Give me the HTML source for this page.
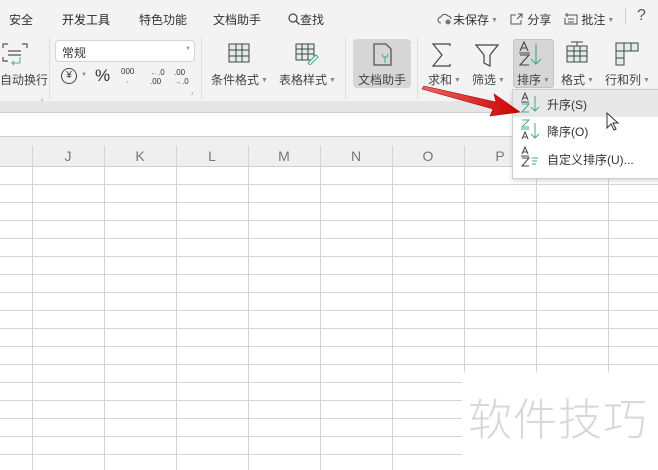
<!DOCTYPE html>
<html><head><meta charset="utf-8"><style>
*{margin:0;padding:0;box-sizing:border-box}
body{width:658px;height:470px;overflow:hidden;background:#fff;font-family:"Liberation Sans","Noto Sans CJK SC",sans-serif;color:#333;position:relative}
.a{position:absolute;white-space:nowrap}
.t{font-size:12px}
.lbl{font-size:12px;color:#444}
.dd{font-size:7px;color:#888;vertical-align:middle;margin-left:2px}
</style></head><body>
<div class="a" style="left:0;top:0;width:658px;height:101px;background:#f3f3f3"></div>
<div class="a t" style="left:9px;top:11px">安全</div>
<div class="a t" style="left:62px;top:11px;color:#222">开发工具</div>
<div class="a t" style="left:139px;top:11px">特色功能</div>
<div class="a t" style="left:213px;top:11px">文档助手</div>
<div class="a t" style="left:288px;top:11px"><svg width="12" height="12" style="vertical-align:-1px"><circle cx="5" cy="5" r="4" fill="none" stroke="#444" stroke-width="1.2"/><path d="M8 8l3.5 3.5" stroke="#444" stroke-width="1.3"/></svg>查找</div>
<div class="a t" style="left:437px;top:11px"><svg width="16" height="12" style="vertical-align:-1px"><path d="M4 10a3 3 0 010-6a4 4 0 017-1a3 3 0 013 3" fill="none" stroke="#555"/><circle cx="11" cy="9" r="2.5" fill="#777"/></svg>未保存<span class="dd">▼</span></div>
<div class="a t" style="left:510px;top:11px"><svg width="14" height="12" style="vertical-align:-1px"><path d="M6 2H1v9h10V7M7 6l5-5M8 1h4v4" fill="none" stroke="#555"/></svg> 分享</div>
<div class="a t" style="left:564px;top:11px"><svg width="14" height="13" style="vertical-align:-1px"><path d="M3 1v4M1 3h4M5 3h8v9H1V6M4 7h6M4 10h6" fill="none" stroke="#555"/></svg> 批注<span class="dd">▼</span></div>
<div class="a" style="left:625px;top:8px;width:1px;height:16px;background:#ccc"></div>
<div class="a" style="left:637px;top:7px;font-size:16px;color:#555">?</div>
<svg class="a" style="left:2px;top:43px" width="26" height="24"><path d="M1 5V1h5M20 1h5v4M1 14v4h5M6 8h13M6 12h13" fill="none" stroke="#555" stroke-width="1.2"/><path d="M18 14v6h-8M12 18l-2 2 2 2" stroke="#5a9" fill="none"/></svg>
<div class="a lbl" style="left:0;top:71px">自动换行</div>
<div class="a" style="left:40px;top:94px;font-size:7px;color:#888">⌟</div>
<div class="a" style="left:49px;top:38px;width:1px;height:60px;background:#ddd"></div>
<div class="a" style="left:55px;top:40px;width:140px;height:22px;border:1px solid #d5d5d5;border-radius:4px;background:#fff"></div>
<div class="a t" style="left:62px;top:44px">常规</div>
<div class="a" style="left:185px;top:46px;font-size:6px;color:#999">▼</div>
<div class="a" style="left:61px;top:68px;width:16px;height:16px;border:1.2px solid #444;border-radius:50%;font-size:10px;text-align:center;line-height:14px">¥</div>
<div class="a" style="left:81px;top:72px;font-size:6px;color:#888">▼</div>
<div class="a" style="left:95px;top:66px;font-size:17px;color:#333">%</div>
<div class="a" style="left:121px;top:68px;font-size:8px;line-height:8px;text-align:center">000<br><span style="color:#4a8">,</span></div>
<div class="a" style="left:150px;top:68px;font-size:8px;line-height:9px"><span style="color:#4a8">←</span>.0<br>.00</div>
<div class="a" style="left:174px;top:68px;font-size:8px;line-height:9px">.00<br><span style="color:#4a8">→</span>.0</div>
<div class="a" style="left:190px;top:88px;font-size:7px;color:#888">⌟</div>
<div class="a" style="left:201px;top:38px;width:1px;height:60px;background:#ddd"></div>
<svg class="a" style="left:228px;top:43px" width="22" height="20"><rect x="1" y="1" width="20" height="18" fill="#dfeee6" stroke="#444"/><path d="M1 7h20M1 13h20M8 1v18M14 1v18" stroke="#444" fill="none"/></svg>
<div class="a lbl" style="left:211px;top:71px">条件格式<span class="dd">▼</span></div>
<svg class="a" style="left:295px;top:43px" width="24" height="22"><rect x="1" y="1" width="18" height="16" fill="#dfeee6" stroke="#444"/><path d="M1 6h18M1 11h18M7 1v16M13 1v16" stroke="#444"/><path d="M13 20l8-8 2 2-8 8z" fill="#fff" stroke="#4a8"/></svg>
<div class="a lbl" style="left:279px;top:71px">表格样式<span class="dd">▼</span></div>
<div class="a" style="left:345px;top:38px;width:1px;height:60px;background:#ddd"></div>
<div class="a" style="left:353px;top:39px;width:58px;height:49px;background:#d6d6d6;border-radius:4px"></div>
<svg class="a" style="left:372px;top:43px" width="22" height="24"><path d="M2 1h12l5 5v16H2z" fill="none" stroke="#555" stroke-width="1.3"/><path d="M11 14h4M13 14v6M10 11l1 3M16 11l-1 3" stroke="#4a8" fill="none"/></svg>
<div class="a lbl" style="left:358px;top:71px">文档助手</div>
<div class="a" style="left:417px;top:38px;width:1px;height:60px;background:#ddd"></div>
<svg class="a" style="left:431px;top:43px" width="22" height="24"><path d="M19 3V1H2l9 11L2 23h17v-2" fill="none" stroke="#444" stroke-width="1.2"/></svg>
<div class="a lbl" style="left:428px;top:71px">求和<span class="dd">▼</span></div>
<svg class="a" style="left:475px;top:44px" width="24" height="24"><path d="M1 1h22l-8 10v11l-6-3v-8z" fill="none" stroke="#444" stroke-width="1.2"/></svg>
<div class="a lbl" style="left:472px;top:71px">筛选<span class="dd">▼</span></div>
<div class="a" style="left:513px;top:39px;width:41px;height:49px;background:#d6d6d6;border:1px solid #c4c4c4;border-radius:3px"></div>
<svg class="a" style="left:518px;top:41px" width="30" height="26"><g fill="none" stroke="#444" stroke-width="1.1"><path d="M2 10L6 1l4 9M3.5 7h5M1 12h11M2 14h9L2 24h9"/></g><path d="M18 3v20M13 18l5 5 5-5" fill="none" stroke="#4a8" stroke-width="1.2"/></svg>
<div class="a lbl" style="left:517px;top:71px">排序<span class="dd">▼</span></div>
<svg class="a" style="left:566px;top:41px" width="22" height="24"><path d="M5 1h12M11 1v4" stroke="#444"/><rect x="1" y="5" width="20" height="16" fill="#dfeee6" stroke="#444"/><path d="M1 10h20M1 15h20M8 5v16M14 5v16" stroke="#444"/></svg>
<div class="a lbl" style="left:561px;top:71px">格式<span class="dd">▼</span></div>
<svg class="a" style="left:615px;top:42px" width="24" height="24"><path d="M1 1h22v8H9v14H1z" fill="#dfeee6" stroke="#444"/><path d="M9 1v8M16 1v8M1 9h8M1 16h8" stroke="#444"/></svg>
<div class="a lbl" style="left:605px;top:71px">行和列<span class="dd">▼</span></div>
<div class="a" style="left:0;top:101px;width:658px;height:12px;background:#e6e6e6;border-bottom:1px solid #cfcfcf"></div>
<div class="a" style="left:0;top:136px;width:658px;height:31px;background:#efefef;border-top:1px solid #cfcfcf;border-bottom:1px solid #cfcfcf"></div>
<svg class="a" style="left:0;top:136px" width="658" height="334">
<g stroke="#d4d4d4" stroke-width="1">
<path d="M32.5 10V334M104.5 10V334M176.5 10V334M248.5 10V334M320.5 10V334M392.5 10V334M464.5 10V334M536.5 10V334M608.5 10V334"/>
<path d="M0 48.5H658M0 66.5H658M0 84.5H658M0 102.5H658M0 120.5H658M0 138.5H658M0 156.5H658M0 174.5H658M0 192.5H658M0 210.5H658M0 228.5H658M0 246.5H658M0 264.5H658M0 282.5H658M0 300.5H658M0 318.5H658"/>
</g>
<g font-size="14" fill="#777" text-anchor="middle" font-family="Liberation Sans,sans-serif">
<text x="68" y="25">J</text><text x="140" y="25">K</text><text x="212" y="25">L</text><text x="284" y="25">M</text><text x="356" y="25">N</text><text x="428" y="25">O</text><text x="500" y="25">P</text>
</g>
</svg>
<div class="a" style="left:462px;top:372px;width:196px;height:98px;background:#fff"></div>
<div class="a" style="left:468px;top:384px;font-size:44px;color:#d8d8d8;letter-spacing:1px;font-weight:300">软件技巧</div>
<div class="a" style="left:512px;top:89px;width:150px;height:90px;background:#fff;border:1px solid #d0d0d0;box-shadow:0 2px 4px rgba(0,0,0,.15)"></div>
<div class="a" style="left:513px;top:90px;width:145px;height:27px;background:#e8e8e8"></div>
<svg class="a" style="left:520px;top:92px" width="22" height="22"><path d="M2 8L5 1l3 7M3 6h4M1 10h8" fill="none" stroke="#444"/><path d="M2 12h7l-7 8h7" fill="none" stroke="#4a8"/><path d="M15 4v15M11 15l4 4 4-4" fill="none" stroke="#4a8"/></svg>
<div class="a t" style="left:547px;top:96px">升序(S)</div>
<svg class="a" style="left:520px;top:119px" width="22" height="22"><path d="M2 1h7L2 8h7M1 10h8" fill="none" stroke="#4a8"/><path d="M2 20l3-7 3 7M3 18h4" fill="none" stroke="#444"/><path d="M15 4v15M11 15l4 4 4-4" fill="none" stroke="#4a8"/></svg>
<div class="a t" style="left:547px;top:123px">降序(O)</div>
<svg class="a" style="left:520px;top:146px" width="22" height="22"><path d="M2 8L5 1l3 7M3 6h4M1 10h8M2 12h7l-7 8h7" fill="none" stroke="#444"/><path d="M12 12h6M12 15h5M12 18h4" stroke="#4a8"/></svg>
<div class="a t" style="left:547px;top:151px">自定义排序(U)...</div>
<svg class="a" style="left:606px;top:112px" width="14" height="20"><path d="M1 1v15l4-4 3 6 2-1-3-6h5z" fill="#fff" stroke="#333"/></svg>
<svg class="a" style="left:420px;top:80px" width="105" height="40"><defs><linearGradient id="g" x1="0" x2="1"><stop offset="0" stop-color="#e66"/><stop offset="1" stop-color="#c00"/></linearGradient></defs>
<path d="M4 6L76 22L74 14L100 32L70 36L73 29L2 9z" fill="url(#g)" stroke="#a00" stroke-width=".6"/></svg>
</body></html>
